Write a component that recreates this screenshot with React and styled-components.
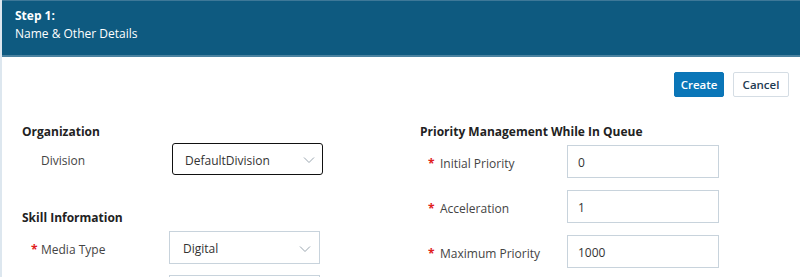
import React from 'react';
import styled, { createGlobalStyle } from 'styled-components';

const Global = createGlobalStyle`
  html, body { margin: 0; padding: 0; background: #fff; }
  body { font-family: "Open Sans", "Noto Sans", sans-serif; font-size: 12px; color: #333; }
`;

const Page = styled.div`
  border-left: 2px solid #dde7ef;
  height: 277px;
  overflow: hidden;
  box-sizing: border-box;
`;

const Header = styled.div`
  background: #0e5a80;
  border-top: 1px solid #3d7898;
  border-bottom: 2px solid #4a82a0;
  height: 48px;
  padding: 6px 13px 0;
  box-sizing: content-box;
  color: #fff;
  line-height: 18px;
`;

const StepTitle = styled.div`
  font-weight: 700;
`;

const Toolbar = styled.div`
  display: flex;
  justify-content: flex-end;
  gap: 9px;
  padding: 15px 11px 0 0;
`;

const Button = styled.button`
  font-family: inherit;
  font-size: 11.5px;
  font-weight: 600;
  height: 25px;
  padding: 0;
  border-radius: 2px;
  border: 1px solid ${p => (p.$primary ? '#0a74b6' : '#d5dde4')};
  background: ${p => (p.$primary ? '#0a76b8' : '#fff')};
  color: ${p => (p.$primary ? '#fff' : '#1d3a52')};
  width: ${p => (p.$primary ? '50px' : '56px')};
`;

const Columns = styled.div`
  display: grid;
  grid-template-columns: 398px 1fr;
  padding: 26px 0 0 20px;
`;

const Section = styled.div`
  display: flex;
  flex-direction: column;
`;

const Heading = styled.div`
  font-weight: 700;
  color: #222;
  line-height: 18px;
  margin-bottom: ${p => p.$mb || '2px'};
`;

const Row = styled.div`
  display: grid;
  grid-template-columns: ${p => p.$labelWidth || '150px'} ${p => p.$fieldWidth || '151px'};
  align-items: center;
  margin-bottom: ${p => p.$mb || '12px'};
`;

const Label = styled.div`
  display: flex;
  align-items: center;
  padding-left: ${p => p.$indent || '9px'};
  padding-top: 3px;
  color: #444;
  font-size: 12px;
`;

const Star = styled.span`
  color: #e02020;
  width: ${p => p.$w || '10px'};
  font-size: 12px;
  font-weight: 700;
`;

const Select = styled.div`
  display: flex;
  align-items: center;
  justify-content: space-between;
  height: ${p => (p.$focused ? '32px' : '33px')};
  box-sizing: border-box;
  padding: 2px ${p => (p.$focused ? '7px' : '8px')} 0 ${p => (p.$focused ? '12px' : '13px')};
  border: ${p => (p.$focused ? '1.5px solid #111' : '1px solid #c8d3dc')};
  border-radius: ${p => (p.$focused ? '3px' : '0')};
  color: #333;
  font-size: 12px;
  background: #fff;
`;

const Input = styled.div`
  height: 33px;
  box-sizing: border-box;
  padding: 1px 10px 0;
  display: flex;
  align-items: center;
  border: 1px solid #c8d3dc;
  color: #333;
  font-size: 12px;
`;

const Chevron = () => (
  <svg width="12" height="8" viewBox="0 0 12 8">
    <path d="M1 1.5 L6 6.5 L11 1.5" fill="none" stroke="#9aa6b0" strokeWidth="1" />
  </svg>
);

export default function App() {
  return (
    <>
      <Global />
      <Page>
        <Header>
          <StepTitle>Step 1:</StepTitle>
          <div>Name &amp; Other Details</div>
        </Header>
        <Toolbar>
          <Button $primary>Create</Button>
          <Button>Cancel</Button>
        </Toolbar>
        <Columns>
          <Section>
            <Heading>Organization</Heading>
            <Row $mb="34px">
              <Label $indent="19px">Division</Label>
              <Select $focused>
                DefaultDivision
                <Chevron />
              </Select>
            </Row>
            <Heading $mb="4px">Skill Information</Heading>
            <Row $labelWidth="147px" $mb="11px">
              <Label><Star>*</Star>Media Type</Label>
              <Select>
                Digital
                <Chevron />
              </Select>
            </Row>
            <Row $labelWidth="147px">
              <Label />
              <Select />
            </Row>
          </Section>
          <Section>
            <Heading $mb="4px">Priority Management While In Queue</Heading>
            <Row $labelWidth="147px" $fieldWidth="152px">
              <Label $indent="8px"><Star $w="12px">*</Star>Initial Priority</Label>
              <Input>0</Input>
            </Row>
            <Row $labelWidth="147px" $fieldWidth="152px">
              <Label $indent="8px"><Star $w="12px">*</Star>Acceleration</Label>
              <Input>1</Input>
            </Row>
            <Row $labelWidth="147px" $fieldWidth="152px">
              <Label $indent="8px"><Star $w="12px">*</Star>Maximum Priority</Label>
              <Input>1000</Input>
            </Row>
          </Section>
        </Columns>
      </Page>
    </>
  );
}
